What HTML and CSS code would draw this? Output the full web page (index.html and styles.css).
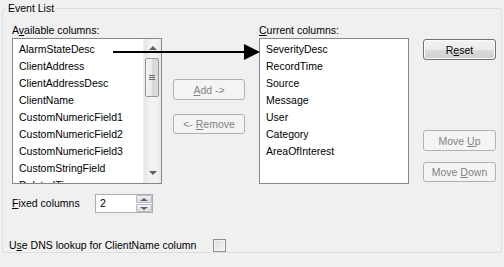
FILE: index.html
```html
<!DOCTYPE html>
<html lang="en">
<head>
    <meta charset="UTF-8">
    <title>Event List</title>
    <link rel="stylesheet" href="styles.css">
</head>
<body>
    <fieldset class="group">
        <legend>Event List</legend>

        <!-- column pickers -->
        <div class="columns">
            <div class="caption cap-avail">A<u>v</u>ailable columns:</div>
            <div class="caption cap-current"><u>C</u>urrent columns:</div>

            <div class="listbox avail">
                <ul class="items">
                    <li>AlarmStateDesc</li>
                    <li>ClientAddress</li>
                    <li>ClientAddressDesc</li>
                    <li>ClientName</li>
                    <li>CustomNumericField1</li>
                    <li>CustomNumericField2</li>
                    <li>CustomNumericField3</li>
                    <li>CustomStringField</li>
                    <li>DeletedTime</li>
                </ul>
                <div class="vscroll">
                    <span class="sarrow up"></span>
                    <span class="thumb"><i></i><i></i><i></i></span>
                    <span class="sarrow down"></span>
                </div>
            </div>

            <div class="mid-buttons">
                <button class="btn add" disabled><u>A</u>dd -&gt;</button>
                <button class="btn remove" disabled>&lt;- <u>R</u>emove</button>
            </div>

            <div class="listbox current">
                <ul class="items">
                    <li>SeverityDesc</li>
                    <li>RecordTime</li>
                    <li>Source</li>
                    <li>Message</li>
                    <li>User</li>
                    <li>Category</li>
                    <li>AreaOfInterest</li>
                </ul>
            </div>

            <div class="side-buttons">
                <button class="btn reset">R<u>e</u>set</button>
                <button class="btn move-up" disabled>Move <u>U</u>p</button>
                <button class="btn move-down" disabled>Move <u>D</u>own</button>
            </div>
        </div>

        <!-- fixed columns -->
        <div class="fixed-row">
            <span class="fixed-label"><u>F</u>ixed columns</span>
            <div class="spinner">
                <span class="spin-value">2</span>
                <div class="spin-btns">
                    <span class="spin up"></span>
                    <span class="spin down"></span>
                </div>
            </div>
        </div>

        <div class="dns-row">
            <span class="dns-label">U<u>s</u>e DNS lookup for ClientName column</span>
            <span class="checkbox"></span>
        </div>

        <!-- annotation arrow -->
        <div class="arrow">
            <span class="arrow-line"></span>
            <span class="arrow-head"></span>
        </div>
    </fieldset>
</body>
</html>
```

FILE: styles.css
```css
body {
    margin: 0;
    background-color: #f0f0f0;
    font-family: 'Liberation Sans', Arial, sans-serif;
    font-size: 10.5px;
    line-height: 13px;
    color: #000;
}
u {
    text-decoration: underline;
    text-underline-offset: 1px;
}
.group {
    position: relative;
    margin: 2px 2px 0 2px;
    padding: 9px 0 13px 9px;
    border: 1px solid #d5dfe5;
    border-radius: 3px;
    height: 251px;
    box-sizing: border-box;
}
.group legend {
    padding: 0 2px;
    margin-left: -6px;
    line-height: 13px;
}
.columns {
    display: grid;
    grid-template-columns: 150px 72px 150px 73px;
    grid-template-rows: 14px 146px;
    column-gap: 11px;
}
.cap-avail {
    grid-area: 1 / 1;
}
.cap-current {
    grid-area: 1 / 3;
    margin-left: 3px;
    margin-right: -3px;
}
.listbox {
    position: relative;
    background: #fff;
    border: 1px solid #828790;
    box-sizing: border-box;
    overflow: hidden;
}
.avail {
    grid-area: 2 / 1;
}
.current {
    grid-area: 2 / 3;
    margin-left: 3px;
    margin-right: -3px;
}
.items {
    list-style: none;
    margin: 0;
    padding: 2px 0 0 6px;
}
.items li {
    height: 17px;
    line-height: 17px;
    white-space: nowrap;
}
.vscroll {
    position: absolute;
    top: 0;
    right: 0;
    bottom: 0;
    width: 17px;
    background: linear-gradient(to right, #e6e6e6, #f3f3f3 40%, #f3f3f3 70%, #e8e8e8);
    border-left: 1px solid #eeeeee;
}
.sarrow {
    position: absolute;
    left: 5px;
    width: 0;
    height: 0;
    border-left: 4px solid transparent;
    border-right: 4px solid transparent;
}
.sarrow.up {
    top: 7px;
    border-bottom: 4px solid #606060;
}
.sarrow.down {
    bottom: 8px;
    border-top: 4px solid #606060;
}
.thumb {
    position: absolute;
    top: 19px;
    left: 1px;
    width: 14px;
    height: 39px;
    border: 1px solid #979797;
    border-radius: 2px;
    box-sizing: border-box;
    background: linear-gradient(to right, #f3f3f3, #e8e8e8 50%, #d8d8d8 50%, #dcdcdc);
    display: flex;
    flex-direction: column;
    align-items: center;
    justify-content: center;
    gap: 1px;
}
.thumb i {
    display: block;
    width: 6px;
    height: 1px;
    background: #6a6a6a;
}
.mid-buttons {
    grid-area: 2 / 2;
    display: flex;
    flex-direction: column;
    padding-top: 41px;
    gap: 14px;
}
.side-buttons {
    grid-area: 2 / 4;
    margin-left: 6px;
    margin-right: -6px;
    display: flex;
    flex-direction: column;
    padding-top: 1px;
}
.btn {
    height: 21px;
    padding: 0;
    font-family: inherit;
    font-size: 10.5px;
    color: #000;
    border: 1px solid #707070;
    border-radius: 3px;
    background: linear-gradient(#f2f2f2, #ebebeb 50%, #dddddd 50%, #cfcfcf);
    box-shadow: inset 0 0 0 1px #fbfbfb;
}
.btn:disabled {
    color: #838383;
    border-color: #adb2b5;
    background: #f4f4f4;
    box-shadow: none;
}
.btn.add,
.btn.remove {
    width: 72px;
}
.btn.remove {
    height: 20px;
}
.btn.move-up {
    margin-top: 70px;
}
.btn.move-down {
    margin-top: 11px;
    height: 20px;
}
.fixed-row {
    display: flex;
    align-items: center;
    margin-top: 10px;
    height: 19px;
}
.fixed-label {
    width: 83px;
}
.spinner {
    display: flex;
    width: 58px;
    height: 19px;
    box-sizing: border-box;
    border: 1px solid #abadb3;
    background: #fff;
}
.spin-value {
    flex: 1;
    padding-left: 4px;
    line-height: 17px;
}
.spin-btns {
    width: 16px;
    display: flex;
    flex-direction: column;
    gap: 1px;
}
.spin {
    flex: 1;
    position: relative;
    background: linear-gradient(#f2f2f2, #dcdcdc);
    border: 1px solid #b6bac0;
    border-radius: 1px;
}
.spin::after {
    content: "";
    position: absolute;
    left: 3px;
    border-left: 4px solid transparent;
    border-right: 4px solid transparent;
}
.spin.up::after {
    top: 2px;
    border-bottom: 3px solid #4d6185;
}
.spin.down::after {
    top: 2px;
    border-top: 3px solid #4d6185;
}
.dns-row {
    display: flex;
    align-items: center;
    margin-top: 26px;
    margin-left: -3px;
    height: 13px;
}
.dns-label {
    width: 204px;
}
.checkbox {
    width: 13px;
    height: 13px;
    box-sizing: border-box;
    border: 1px solid #8f8f8f;
    background: linear-gradient(135deg, #dcdcdc, #f8f8f8);
    box-shadow: inset 0 0 0 1px #f4f4f4;
}
.arrow {
    position: absolute;
    left: 110px;
    top: 29px;
    width: 147px;
    height: 16px;
}
.arrow-line {
    position: absolute;
    left: 0;
    top: 7px;
    width: 134px;
    height: 2px;
    background: #000;
}
.arrow-head {
    position: absolute;
    right: 0;
    top: 0;
    width: 0;
    height: 0;
    border-top: 8px solid transparent;
    border-bottom: 8px solid transparent;
    border-left: 16px solid #000;
}
```
